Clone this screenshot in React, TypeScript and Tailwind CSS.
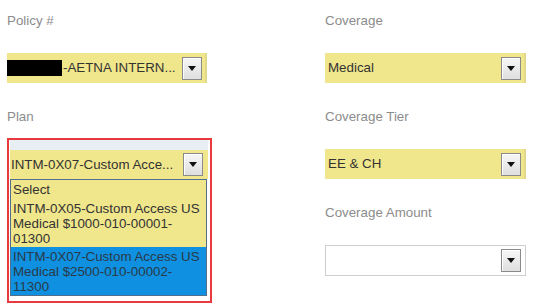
const FONT = { fontFamily: '"Liberation Sans", Arial, sans-serif' }

const Arrow = () => (
  <span className="flex h-[23px] w-[20px] shrink-0 items-center justify-center border border-[#8a8a8a] bg-gradient-to-b from-[#f7f7f7] to-[#dedede] shadow-[inset_1px_1px_0_#ffffff]">
    <svg width="8" height="5" viewBox="0 0 8 5">
      <path d="M0 0h8L4 5z" fill="#111" />
    </svg>
  </span>
)

const Label = ({ text }: { text: string }) => (
  <div className="h-[15px] text-[13.33px] leading-[15px] text-[#8c8c8c]">{text}</div>
)

const Select = ({ children, white }: { children?: React.ReactNode; white?: boolean }) => (
  <div
    className={
      white
        ? "mt-[25px] flex h-[31px] items-center justify-between border border-[#cfcfcf] bg-white pl-[3px] pr-[4px]"
        : "mt-[25px] flex h-[30px] items-center justify-between border-r-2 border-[#e2d88a] bg-[#f0e68c] pl-[3px] pr-[3px] text-[13.33px] text-[#333]"
    }
  >
    <span className="truncate">{children}</span>
    <Arrow />
  </div>
)

export default function App() {
  return (
    <div className="h-[304px] w-[555px] overflow-hidden bg-white" style={FONT}>
      <div className="grid grid-cols-[200px_201px] gap-x-[118px] pl-[7px] pt-[13px]">
        <div>
          <Label text="Policy #" />
          <div className="mt-[25px] flex h-[30px] items-center justify-between border-r-2 border-[#e2d88a] bg-[#f0e68c] pr-[3px] text-[13.33px] text-[#333]">
            <span className="flex items-center">
              <span className="mr-[1px] h-[16px] w-[55px] bg-black" />
              -AETNA INTERN...
            </span>
            <Arrow />
          </div>

          <div className="mt-[26px]">
            <Label text="Plan" />
            <div className="mt-[14px] h-[165px] w-[205px] border-2 border-[#e8393f] pt-[10px] pl-[1px] pr-[2px]">
              <div className="-mt-[10px] h-[10px] bg-[#e8eff4]" />
              <div className="flex h-[29px] items-center justify-between bg-[#f0e68c] pl-[1px] pr-[5px] text-[13.33px] text-[#333]">
                <span>INTM-0X07-Custom Acce...</span>
                <Arrow />
              </div>
              <div className="mr-[1px] border border-[#52708e] bg-[#f0e68c] text-[13.33px] leading-[15px] text-[#333]">
                <div className="px-[2px] py-[2px]">Select</div>
                <div className="px-[2px] pt-[2px] pb-[1px]">
                  INTM-0X05-Custom Access US Medical $1000-010-00001-01300
                </div>
                <div className="bg-[#0f90e0] px-[2px] pt-[2px] pb-[1px] text-[#2a3a48]">
                  INTM-0X07-Custom Access US Medical $2500-010-00002-11300
                </div>
              </div>
            </div>
          </div>
        </div>

        <div>
          <Label text="Coverage" />
          <Select>Medical</Select>
          <div className="mt-[26px]">
            <Label text="Coverage Tier" />
            <Select>EE &amp; CH</Select>
          </div>
          <div className="mt-[26px]">
            <Label text="Coverage Amount" />
            <Select white />
          </div>
        </div>
      </div>
    </div>
  )
}
